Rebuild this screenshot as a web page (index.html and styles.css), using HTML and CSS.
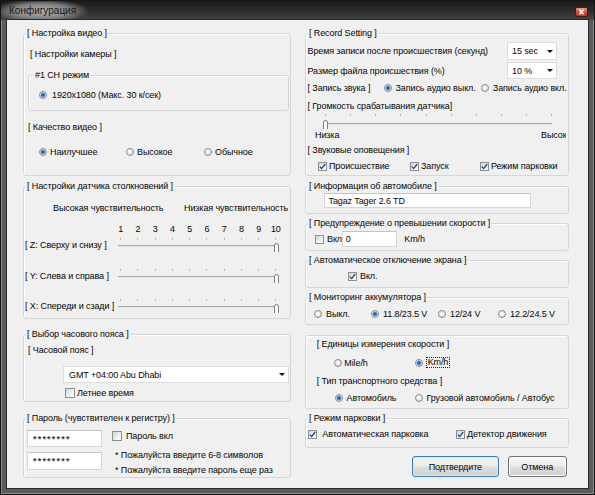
FILE: index.html
```html
<!DOCTYPE html>
<html lang="ru">
<head>
<meta charset="utf-8">
<title>Конфигурация</title>
<link rel="stylesheet" href="styles.css">
</head>
<body>
<div class="window">
  <div class="titlebar">
    <span class="title">Конфигурация</span>
    <span class="close"><svg width="11" height="8" viewBox="0 0 11 8"><path d="M3.5 1.8 L7.5 6.2 M7.5 1.8 L3.5 6.2" stroke="#fff" stroke-width="1.5"/></svg></span>
  </div>
  <div class="client">
    <div class="col col-left">
      <div class="group g-video">
        <div class="cap">[ Настройка видео ]</div>
        <div class="line v-cam">[ Настройки камеры ]</div>
        <div class="group g-ch">
          <div class="cap cap-ch">#1 CH режим</div>
          <div class="row r-ch"><span class="opt"><span class="radio on"></span>1920x1080 (Макс. 30 к/сек)</span></div>
        </div>
        <div class="line v-q">[ Качество видео ]</div>
        <div class="row r-q">
          <span class="opt w-q1"><span class="radio on"></span>Наилучшее</span>
          <span class="opt w-q2"><span class="radio"></span>Высокое</span>
          <span class="opt"><span class="radio"></span>Обычное</span>
        </div>
      </div>

      <div class="group g-col">
        <div class="cap">[ Настройки датчика столкновений ]</div>
        <div class="row sens"><span class="sens-hi">Высокая чувствительность</span><span>Низкая чувствительность</span></div>
        <div class="nums"><span>1</span><span>2</span><span>3</span><span>4</span><span>5</span><span>6</span><span>7</span><span>8</span><span>9</span><span>10</span></div>
        <div class="sl-row r-z">
          <span class="sl-lbl">[ Z: Сверху и снизу ]</span>
          <div class="slider">
            <div class="ticks"><i></i><i></i><i></i><i></i><i></i><i></i><i></i><i></i><i></i><i></i></div>
            <div class="track"></div>
            <svg class="thumb" width="5" height="9" viewBox="0 0 5 9"><path d="M0.5 9 V2.2 Q0.5 0.5 2.5 0.5 Q4.5 0.5 4.5 2.2 V9" fill="#fbfbfb" stroke="#7d7d7d"/></svg>
          </div>
        </div>
        <div class="sl-row r-y">
          <span class="sl-lbl">[ Y: Слева и справа ]</span>
          <div class="slider">
            <div class="ticks"><i></i><i></i><i></i><i></i><i></i><i></i><i></i><i></i><i></i><i></i></div>
            <div class="track"></div>
            <svg class="thumb" width="5" height="9" viewBox="0 0 5 9"><path d="M0.5 9 V2.2 Q0.5 0.5 2.5 0.5 Q4.5 0.5 4.5 2.2 V9" fill="#fbfbfb" stroke="#7d7d7d"/></svg>
          </div>
        </div>
        <div class="sl-row r-x">
          <span class="sl-lbl">[ X: Спереди и сзади ]</span>
          <div class="slider">
            <div class="ticks"><i></i><i></i><i></i><i></i><i></i><i></i><i></i><i></i><i></i><i></i></div>
            <div class="track"></div>
            <svg class="thumb" width="5" height="9" viewBox="0 0 5 9"><path d="M0.5 9 V2.2 Q0.5 0.5 2.5 0.5 Q4.5 0.5 4.5 2.2 V9" fill="#fbfbfb" stroke="#7d7d7d"/></svg>
          </div>
        </div>
      </div>

      <div class="group g-tz">
        <div class="cap">[ Выбор часового пояса ]</div>
        <div class="line tz-lbl">[ Часовой пояс ]</div>
        <div class="combo tz-combo"><span>GMT +04:00 Abu Dhabi</span><span class="arrow"></span></div>
        <div class="row dst"><span class="cb"></span>Летнее время</div>
      </div>

      <div class="group g-pw">
        <div class="cap">[ Пароль (чувствителен к регистру) ]</div>
        <div class="pw-wrap">
          <div class="pw-fields">
            <div class="field pw pw1">********</div>
            <div class="field pw pw2">********</div>
          </div>
          <div class="pw-right">
            <div class="row pw-cb"><span class="cb"></span>Пароль вкл</div>
            <div class="line note1">* Пожалуйста введите 6-8 символов</div>
            <div class="line note2">* Пожалуйста введите пароль еще раз</div>
          </div>
        </div>
      </div>
    </div>

    <div class="col col-right">
      <div class="group g-rec">
        <div class="cap">[ Record Setting ]</div>
        <div class="rec-row rec1"><span>Время записи после происшествия (секунд)</span><div class="combo small h18"><span>15 sec</span><span class="arrow"></span></div></div>
        <div class="rec-row rec2"><span>Размер файла происшествия (%)</span><div class="combo small h17"><span>10 %</span><span class="arrow"></span></div></div>
        <div class="row rec3">
          <span class="w-snd">[ Запись звука ]</span>
          <span class="opt w-snd1"><span class="radio on"></span>Запись аудио выкл.</span>
          <span class="opt"><span class="radio"></span>Запись аудио вкл.</span>
        </div>
        <div class="line rec4">[ Громкость срабатывания датчика]</div>
        <div class="vslider">
          <div class="vticks"><i></i><i></i><i></i><i></i><i></i><i></i><i></i><i></i><i></i><i></i></div>
          <div class="vtrack"></div>
          <svg class="vthumb" width="5" height="9" viewBox="0 0 5 9"><path d="M0.5 9 V2.2 Q0.5 0.5 2.5 0.5 Q4.5 0.5 4.5 2.2 V9" fill="#fbfbfb" stroke="#7d7d7d"/></svg>
        </div>
        <div class="row vlabels"><span class="lo">Низка</span><span class="hi">Высокая</span></div>
        <div class="line rec5">[ Звуковые оповещения ]</div>
        <div class="row rec6">
          <span class="opt w-a1"><span class="cb s9 on"><svg width="7" height="7" viewBox="0 0 7 7"><path d="M0.8 3.6 L2.7 5.6 L6.2 1" stroke="#26406e" stroke-width="1.3" fill="none"/></svg></span>Происшествие</span>
          <span class="opt w-a2"><span class="cb s9 on"><svg width="7" height="7" viewBox="0 0 7 7"><path d="M0.8 3.6 L2.7 5.6 L6.2 1" stroke="#26406e" stroke-width="1.3" fill="none"/></svg></span>Запуск</span>
          <span class="opt"><span class="cb s9 on"><svg width="7" height="7" viewBox="0 0 7 7"><path d="M0.8 3.6 L2.7 5.6 L6.2 1" stroke="#26406e" stroke-width="1.3" fill="none"/></svg></span>Режим парковки</span>
        </div>
      </div>

      <div class="group g-small g-info">
        <div class="cap">[ Информация об автомобиле ]</div>
        <div class="field info">Tagaz Tager 2.6 TD</div>
      </div>

      <div class="group g-small g-speed">
        <div class="cap">[ Предупреждение о превышении скорости ]</div>
        <div class="row sp-row">
          <span class="opt w-vkl"><span class="cb s9"></span>Вкл</span>
          <div class="field sp-field">0</div>
          <span class="kmh">Km/h</span>
        </div>
      </div>

      <div class="group g-small g-auto">
        <div class="cap">[ Автоматическое отключение экрана ]</div>
        <div class="row auto-row"><span class="cb s9 on gap3"><svg width="7" height="7" viewBox="0 0 7 7"><path d="M0.8 3.6 L2.7 5.6 L6.2 1" stroke="#26406e" stroke-width="1.3" fill="none"/></svg></span>Вкл.</div>
      </div>

      <div class="group g-small g-bat">
        <div class="cap">[ Мониторинг аккумулятора ]</div>
        <div class="row bat-row">
          <span class="opt w-b1"><span class="radio"></span>Выкл.</span>
          <span class="opt w-b2"><span class="radio on"></span>11.8/23.5 V</span>
          <span class="opt w-b3"><span class="radio"></span>12/24 V</span>
          <span class="opt"><span class="radio"></span>12.2/24.5 V</span>
        </div>
      </div>

      <div class="group g-units">
        <div class="line u1">[ Единицы измерения скорости ]</div>
        <div class="row u2">
          <span class="opt w-u1"><span class="radio g2"></span>Mile/h</span>
          <span class="opt"><span class="radio on g2"></span><span class="focus">Km/h</span></span>
        </div>
        <div class="line u3">[ Тип транспортного средства ]</div>
        <div class="row u4">
          <span class="opt w-u2"><span class="radio on g3"></span>Автомобиль</span>
          <span class="opt"><span class="radio g3"></span>Грузовой автомобиль / Автобус</span>
        </div>
      </div>

      <div class="group g-park">
        <div class="cap">[ Режим парковки ]</div>
        <div class="row park-row">
          <span class="opt w-p1"><span class="cb s9 on gap4"><svg width="7" height="7" viewBox="0 0 7 7"><path d="M0.8 3.6 L2.7 5.6 L6.2 1" stroke="#26406e" stroke-width="1.3" fill="none"/></svg></span>Автоматическая парковка</span>
          <span class="opt"><span class="cb s9 on"><svg width="7" height="7" viewBox="0 0 7 7"><path d="M0.8 3.6 L2.7 5.6 L6.2 1" stroke="#26406e" stroke-width="1.3" fill="none"/></svg></span>Детектор движения</span>
        </div>
      </div>

      <div class="btns">
        <div class="btn def">Подтвердите</div>
        <div class="btn cancel">Отмена</div>
      </div>
    </div>
  </div>
</div>
</body>
</html>
```

FILE: styles.css
```css
* { box-sizing: border-box; }
html, body { margin: 0; padding: 0; background: #ffffff; }
body {
  font-family: "Liberation Sans", Arial, sans-serif;
  font-size: 9px;
  letter-spacing: -0.1px;
  color: #050505;
}

/* window frame */
.window {
  width: 595px;
  height: 495px;
  background: #5c5c5c;
  border: 1px solid #141414;
  padding: 0 6px 6px;
  display: flex;
  flex-direction: column;
  box-shadow: inset 1px 0 #8c8c8c, inset -1px 0 #8c8c8c, inset 0 -1px #8c8c8c;
}
.titlebar {
  height: 19px;
  margin: 0 -6px;
  padding: 0 6px 0 8px;
  display: flex;
  align-items: center;
  justify-content: space-between;
  background:
    radial-gradient(ellipse 48px 12px at 40px 10px, rgba(185,185,185,0.97) 0, rgba(150,150,150,0.8) 60%, rgba(90,90,90,0) 100%),
    linear-gradient(#1b1b1b, #2e2e2e 55%, #454545);
}
.title { font-size: 10px; color: #151515; letter-spacing: 0; }
.close {
  width: 13px;
  height: 10px;
  margin-top: 2px;
  border: 1px solid #4a1a12;
  border-radius: 2px;
  background: linear-gradient(#ec9a80, #d0533c 50%, #b8341f);
  display: flex;
  align-items: center;
  justify-content: center;
}

.client {
  flex: 1;
  background: #f0f0f0;
  display: flex;
  gap: 14px;
  padding: 13px 0 0 16px;
  box-shadow: 0 0 0 1px #2a2a2a;
}
.col { display: flex; flex-direction: column; flex: none; }
.col-left { width: 268px; }
.col-right { width: 264px; }

/* group boxes */
.group {
  border: 1px solid #d6d6d6;
  border-radius: 3px;
  box-shadow: inset 1px 1px #ffffff;
  flex: none;
}
.cap {
  width: max-content;
  height: 12px;
  line-height: 12px;
  margin: -7px 0 0 1px;
  padding: 0 1px 0 2px;
  background: #f0f0f0;
  white-space: nowrap;
}
.line { height: 12px; line-height: 12px; white-space: nowrap; }
.row { display: flex; align-items: center; height: 12px; white-space: nowrap; }
.opt { display: flex; align-items: center; flex: none; }

.radio {
  width: 8px;
  height: 8px;
  border-radius: 50%;
  border: 1px solid #8a8a8a;
  background: radial-gradient(circle at 45% 40%, #ffffff 0, #e8e8e8 55%, #cdcdcd 100%);
  margin-right: 4px;
  flex: none;
}
.radio.on {
  background: radial-gradient(circle, #15589e 0, #2f7cc8 1.5px, #9cc4ec 2.4px, #f3f3f3 3px, #d8d8d8 100%);
}
.radio.g2 { margin-right: 2px; }
.radio.g3 { margin-right: 3.5px; }

.cb {
  width: 10px;
  height: 10px;
  border: 1px solid #8e8f8f;
  background: linear-gradient(135deg, #d3d3d3, #f6f6f6 70%, #ffffff);
  margin-right: 2px;
  flex: none;
  display: flex;
  align-items: center;
  justify-content: center;
}
.cb.s9 { width: 9px; height: 9px; }
.cb.on { background: linear-gradient(135deg, #c9d7e8, #f2f6fb 70%, #ffffff); }
.cb.gap3 { margin-right: 3px; }
.cb.gap4 { margin-right: 5px; }

.combo {
  display: flex;
  align-items: center;
  justify-content: space-between;
  background: #ffffff;
  border: 1px solid #dcdcdc;
  padding: 0 3px 0 4px;
  white-space: nowrap;
}
.arrow {
  width: 0;
  height: 0;
  border-left: 3px solid transparent;
  border-right: 3px solid transparent;
  border-top: 3px solid #111111;
}
.field {
  background: #ffffff;
  border: 1px solid #d6d6d6;
  border-top-color: #c4c4c4;
  display: flex;
  align-items: center;
  white-space: nowrap;
}

/* left: video */
.g-video { height: 143px; }
.v-cam { margin: 9px 0 0 6px; }
.g-ch { margin: 15px 0 0 4px; width: 261px; height: 36px; }
.cap-ch { margin-left: 4px; }
.r-ch { margin-top: 8px; padding-left: 10px; }
.r-ch .radio { margin-right: 5px; }
.v-q { margin: 10px 0 0 4px; }
.r-q { margin-top: 13px; padding-left: 15px; }
.w-q1 { width: 87px; }
.w-q2 { width: 78px; }
.r-q .radio { margin-right: 3px; }

/* left: collision sensor */
.g-col { height: 133px; margin-top: 10px; }
.sens { margin-top: 10px; padding-left: 29px; }
.sens-hi { width: 131px; }
.nums {
  margin: 9px 0 0 88px;
  height: 12px;
  line-height: 12px;
  display: grid;
  grid-template-columns: repeat(10, 17.26px);
  text-align: center;
}
.sl-row { display: flex; align-items: center; height: 14px; white-space: nowrap; }
.r-z { margin-top: 3px; }
.r-y { margin-top: 17px; }
.r-x { margin-top: 16px; }
.sl-lbl { width: 87px; margin-left: 1px; flex: none; }
.slider { position: relative; width: 172.6px; height: 14px; flex: none; }
.ticks { display: grid; grid-template-columns: repeat(10, 17.26px); height: 2px; }
.ticks i, .vticks i { display: block; width: 1px; height: 2px; background: #b9b9b9; justify-self: center; }
.track {
  margin: 5px 0 0 6px;
  width: 161px;
  height: 2px;
  border-top: 1px solid #a9a9a9;
  border-bottom: 1px solid #e6e6e6;
}
.thumb { position: absolute; left: 161.5px; top: 5px; }

/* left: timezone */
.g-tz { height: 68px; margin-top: 15px; }
.tz-lbl { margin: 4px 0 0 4px; }
.tz-combo { margin: 10px 0 0 39px; width: 226px; height: 17px; padding: 0 3px 0 5px; }
.dst { margin: 4px 0 0 41px; height: 11px; }

/* left: password */
.g-pw { height: 60px; margin-top: 16px; }
.pw-wrap { display: flex; }
.pw-fields { margin-left: 3px; width: 75px; display: flex; flex-direction: column; }
.pw { padding-left: 5px; color: #3a3a3a; font-size: 9px; letter-spacing: 1.2px; font-weight: bold; }
.pw1 { margin-top: 6px; height: 17px; }
.pw2 { margin-top: 5px; height: 18px; }
.pw-right { margin-left: 10px; }
.pw-cb { margin-top: 7px; height: 10px; }
.pw-cb .cb { margin-right: 4px; }
.note1 { margin: 8px 0 0 3px; }
.note2 { margin: 3px 0 0 3px; }

/* right: record setting */
.g-rec { height: 143px; }
.rec-row {
  display: flex;
  align-items: center;
  justify-content: space-between;
  padding: 0 11px 0 1.5px;
  white-space: nowrap;
}
.rec1 { margin-top: 3px; height: 18px; }
.rec2 { margin-top: 2px; height: 17px; }
.small { width: 50px; padding: 0 3px 0 4px; }
.h18 { height: 18px; }
.h17 { height: 17px; }
.rec3 { margin-top: 3px; padding-left: 1.5px; }
.w-snd { width: 76px; }
.w-snd1 { width: 97.3px; }
.rec4 { margin: 6px 0 0 1.5px; }
.vslider { position: relative; height: 15px; margin-left: 7.15px; width: 251px; }
.vticks { display: grid; grid-template-columns: repeat(10, 25.1px); height: 2px; margin-top: 2px; }
.vtrack {
  margin: 7px 0 0 9.85px;
  width: 229px;
  height: 2px;
  border-top: 1px solid #a9a9a9;
  border-bottom: 1px solid #e6e6e6;
}
.vthumb { position: absolute; left: 9.85px; top: 6px; }
.vlabels { padding-left: 9px; }
.hi { width: 25px; overflow: hidden; margin-left: auto; margin-right: 2px; }
.rec5 { margin: 3px 0 0 1.5px; }
.rec6 { margin-top: 4px; padding-left: 12px; }
.w-a1 { width: 92px; }
.w-a2 { width: 70px; }

/* right: small groups */
.g-small { height: 28px; }
.g-info { margin-top: 10px; }
.info { margin: 1px 0 0 18px; width: 207px; height: 15px; padding-left: 3.5px; }
.g-speed { margin-top: 9px; }
.sp-row { margin-top: 2px; height: 16px; padding-left: 9px; }
.w-vkl { width: 26.7px; }
.w-vkl .cb { margin-right: 3px; }
.sp-field { width: 55px; height: 16px; padding-left: 3px; }
.kmh { margin-left: 7.6px; }
.g-auto { margin-top: 9px; }
.auto-row { margin: 4px 0 0 42px; }
.g-bat { margin-top: 9px; }
.bat-row { margin-top: 5px; padding-left: 8px; }
.w-b1 { width: 57px; }
.w-b2 { width: 67px; }
.w-b3 { width: 60px; }

/* right: units */
.g-units { height: 74px; margin-top: 10px; }
.u1 { margin: 2px 0 0 10.7px; }
.u2 { margin-top: 6.7px; padding-left: 28.3px; }
.w-u1 { width: 80.7px; }
.focus { border: 1px dotted #222222; padding: 0 1px; line-height: 9px; margin-left: 0.7px; }
.u3 { margin: 6.3px 0 0 10.7px; }
.u4 { margin-top: 5.3px; padding-left: 29px; }
.w-u2 { width: 80px; }

/* right: parking */
.g-park { height: 30px; margin-top: 9px; }
.park-row { margin-top: 4px; padding-left: 2.3px; }
.w-p1 { width: 147.7px; }

/* buttons */
.btns { display: flex; justify-content: flex-end; gap: 8.7px; margin-top: 8px; padding-right: 2.3px; }
.btn {
  height: 21px;
  border: 1px solid #707070;
  border-radius: 3px;
  background: linear-gradient(#f4f4f4 0, #ececec 48%, #dedede 52%, #d0d0d0 100%);
  box-shadow: inset 0 0 0 1px #fbfbfb;
  display: flex;
  align-items: center;
  justify-content: center;
  white-space: nowrap;
}
.btn.def { width: 87.3px; border-color: #3c7fb1; box-shadow: inset 0 0 0 1px #cfeafb; }
.btn.cancel { width: 59px; }
```
